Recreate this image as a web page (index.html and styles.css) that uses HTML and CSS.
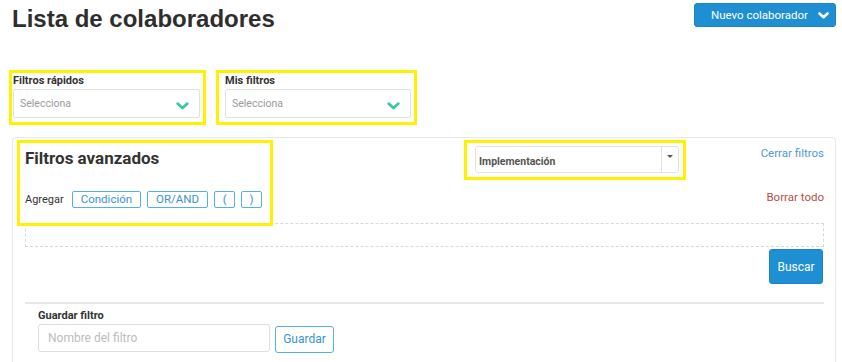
FILE: index.html
```html
<!DOCTYPE html>
<html lang="es">
<head>
  <meta charset="UTF-8">
  <title>Lista de colaboradores</title>
  <link rel="stylesheet" href="styles.css">
</head>
<body>
  <div class="page">

    <header class="top">
      <h1>Lista de colaboradores</h1>
      <button class="btn-primary btn-new">
        Nuevo colaborador
        <svg class="chev" width="11" height="7" viewBox="0 0 11 7"><path d="M1.5 1.5 L5.5 5.2 L9.5 1.5" fill="none" stroke="#fff" stroke-width="2.6" stroke-linecap="round" stroke-linejoin="round"/></svg>
      </button>
    </header>

    <section class="quick">
      <div class="quick-group mark first">
        <label>Filtros rápidos</label>
        <div class="fake-select">
          <span>Selecciona</span>
          <svg width="13" height="8" viewBox="0 0 13 8"><path d="M1.8 1.8 L6.5 6 L11.2 1.8" fill="none" stroke="#37c8a3" stroke-width="2.8" stroke-linecap="round" stroke-linejoin="round"/></svg>
        </div>
      </div>
      <div class="quick-group mark second">
        <label>Mis filtros</label>
        <div class="fake-select">
          <span>Selecciona</span>
          <svg width="13" height="8" viewBox="0 0 13 8"><path d="M1.8 1.8 L6.5 6 L11.2 1.8" fill="none" stroke="#37c8a3" stroke-width="2.8" stroke-linecap="round" stroke-linejoin="round"/></svg>
        </div>
      </div>
    </section>

    <section class="card">
      <div class="adv-head">
        <div class="adv-left">
          <h2>Filtros avanzados</h2>
          <div class="add-row">
            <span>Agregar</span>
            <button class="btn-outline">Condición</button>
            <button class="btn-outline">OR/AND</button>
            <button class="btn-outline paren">(</button>
            <button class="btn-outline paren">)</button>
          </div>
        </div>
        <div class="adv-select">
          <div class="select-box">
            <span class="select-text">Implementación</span>
            <span class="caret-cell"><i class="caret"></i></span>
          </div>
        </div>
        <div class="adv-links">
          <a class="link-blue">Cerrar filtros</a>
          <a class="link-red">Borrar todo</a>
        </div>
      </div>

      <div class="drop-zone"></div>

      <div class="actions">
        <button class="btn-primary btn-search">Buscar</button>
      </div>

      <div class="save">
        <label>Guardar filtro</label>
        <div class="save-row">
          <input type="text" placeholder="Nombre del filtro">
          <button class="btn-outline btn-save">Guardar</button>
        </div>
      </div>
    </section>

  </div>
</body>
</html>
```

FILE: styles.css
```css
html {
  overflow: hidden;
}
body {
  margin: 0;
  font-family: Roboto, "Liberation Sans", sans-serif;
  color: #333;
  background: #fff;
}
.page {
  padding: 0 6px 0 12px;
}
button {
  font-family: inherit;
  cursor: pointer;
}

/* header */
.top {
  display: flex;
  justify-content: space-between;
  align-items: flex-start;
}
.top h1 {
  margin: 5px 0 0;
  font-family: "Liberation Sans", Arial, sans-serif;
  font-size: 24px;
  line-height: 28px;
  font-weight: bold;
  color: #2e2e2e;
}
.btn-primary {
  background: #1e8fd3;
  color: #fff;
  border: 1px solid #1a86c8;
  border-radius: 3px;
}
.btn-new {
  margin-top: 3px;
  width: 142px;
  height: 24px;
  padding: 0 6px 0 16px;
  font-size: 11.5px;
  display: flex;
  align-items: center;
  justify-content: space-between;
}

/* quick filters */
.quick {
  display: flex;
  gap: 10px;
  margin: 37px 0 0 -3px;
}
.mark {
  border: 3px solid #fff200;
}
.quick-group {
  box-sizing: border-box;
  height: 55px;
  padding: 1px 3px 3px 1px;
}
.quick-group.first {
  width: 197px;
}
.quick-group.second {
  width: 201px;
  padding-left: 6px;
}
.quick-group label {
  display: block;
  font-size: 11px;
  font-weight: bold;
  line-height: 14px;
  color: #333;
}
.fake-select {
  box-sizing: border-box;
  height: 29px;
  margin-top: 1px;
  border: 1px solid #e2e2e2;
  border-radius: 2px;
  display: flex;
  align-items: center;
  justify-content: space-between;
  padding: 0 10px 0 6px;
  font-size: 10.5px;
  color: #9a9a9a;
}
.fake-select svg {
  margin-top: 4px;
}

/* advanced filters card */
.card {
  margin-top: 12px;
  border: 1px solid #e8e8e8;
  border-radius: 4px;
  padding: 5px 11px 20px 12px;
}
.adv-head {
  display: flex;
  align-items: flex-start;
}
.adv-left {
  box-sizing: border-box;
  width: 240px;
  height: 70px;
  margin-top: 5px;
  outline: 3px solid #fff200;
  outline-offset: 5px;
}
.adv-left h2 {
  margin: 0;
  font-size: 17px;
  line-height: 20px;
  font-weight: bold;
  color: #333;
}
.add-row {
  display: flex;
  align-items: center;
  gap: 6px;
  margin-top: 23px;
  font-size: 11px;
  color: #333;
}
.add-row span {
  margin-right: 2px;
}
.btn-outline {
  background: #fff;
  border: 1px solid #5aaee6;
  border-radius: 2px;
  color: #3a93d3;
  font-size: 11.5px;
  height: 17px;
  padding: 0 8px;
  line-height: 15px;
}
.btn-outline.paren {
  width: 21px;
  padding: 0;
}
.adv-select {
  margin-left: auto;
  padding: 3px 4px 4px 8px;
  outline: 3px solid #fff200;
}
.select-box {
  box-sizing: border-box;
  width: 204px;
  height: 27px;
  border: 1px solid #e2e2e2;
  border-radius: 3px;
  display: flex;
  align-items: stretch;
}
.select-text {
  flex: 1;
  padding: 0 3px;
  font-size: 10.5px;
  font-weight: bold;
  color: #555;
  display: flex;
  align-items: center;
  padding-top: 3px;
}
.caret-cell {
  width: 16px;
  border-left: 1px solid #e2e2e2;
  display: flex;
  justify-content: center;
  padding-top: 8px;
}
.caret {
  width: 0;
  height: 0;
  border-left: 3.5px solid transparent;
  border-right: 3.5px solid transparent;
  border-top: 3.5px solid #555;
}
.adv-links {
  width: 141px;
  display: flex;
  flex-direction: column;
  align-items: flex-end;
  font-size: 11.5px;
  line-height: 14px;
  padding-top: 3px;
}
.link-blue {
  color: #4a9ad6;
}
.link-red {
  margin-top: 30px;
  color: #b25049;
}

.drop-zone {
  height: 22px;
  margin-top: 5px;
  border: 1px dashed #d8d8d8;
}
.actions {
  display: flex;
  justify-content: flex-end;
  margin-top: 2px;
}
.btn-search {
  width: 54px;
  height: 35px;
  font-size: 12px;
  margin-right: 1px;
}

/* save filter */
.save {
  margin-top: 18px;
  border-top: 2px solid #e8e8e8;
  padding: 5px 0 0 13px;
}
.save label {
  display: block;
  font-size: 11px;
  font-weight: bold;
  line-height: 14px;
  color: #333;
}
.save-row {
  display: flex;
  align-items: flex-start;
  gap: 5px;
  margin-top: 1px;
}
.save-row input {
  box-sizing: border-box;
  width: 232px;
  height: 28px;
  border: 1px solid #dedede;
  border-radius: 3px;
  padding: 0 9px;
  font-family: inherit;
  font-size: 12px;
}
.save-row input::placeholder {
  color: #bcbcbc;
}
.btn-save {
  height: 27px;
  margin-top: 2px;
  width: 59px;
  padding: 0;
  border-radius: 3px;
  font-size: 12px;
}
```
